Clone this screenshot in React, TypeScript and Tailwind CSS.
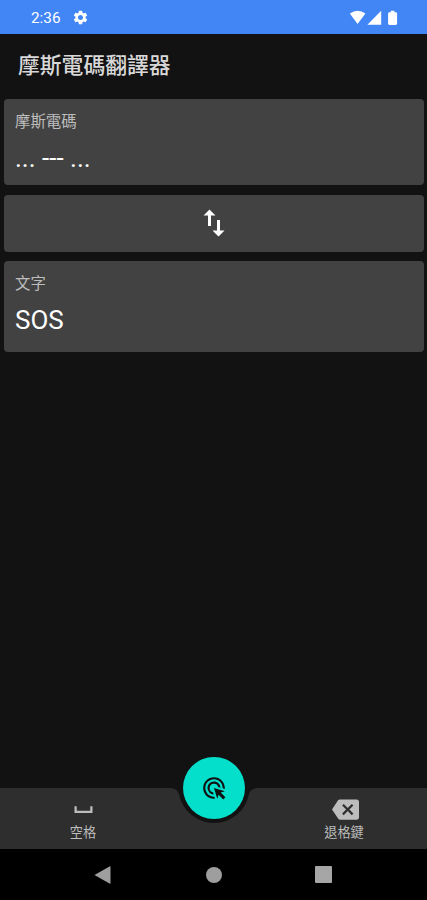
import React from 'react';
import clsx from 'clsx';
import { MdAdsClick, MdBackspace, MdImportExport, MdSettings, MdSpaceBar } from 'react-icons/md';

interface PanelProps {
  children: React.ReactNode;
  className?: string;
}

function Panel({ children, className }: PanelProps) {
  return <section className={clsx('rounded bg-[#424242]', className)}>{children}</section>;
}

interface FieldProps {
  label: string;
  value: string;
  className?: string;
}

function Field({ label, value, className }: FieldProps) {
  return (
    <Panel className={clsx('px-[11px] pt-[13px]', className)}>
      <p className="text-[15.4px] leading-5 text-[#bdbdbd]">{label}</p>
      <p className="mt-[9px] text-[26px] leading-[34px] text-white">{value}</p>
    </Panel>
  );
}

function StatusBar() {
  return (
    <div className="flex h-[33.5px] items-center bg-[#4285f4] pl-[31px] pr-[29px] pt-[2px] text-white">
      <span className="text-[15.3px] leading-5">2:36</span>
      <MdSettings className="ml-[11px] size-[17px]" />
      <svg className="ml-auto" width="49" height="16" viewBox="0 0 49 16" fill="currentColor">
        <path d="M.8 3.4Q8.6-2 16.4 3.4L8.6 14z" />
        <path d="M32.2.8v14H18.4z" />
        <path d="M41.8.7h3.6v1.5h1.3q1.4 0 1.4 1.4v10q0 1.4-1.4 1.4h-6.2q-1.4 0-1.4-1.4v-10q0-1.4 1.4-1.4h1.3z" />
      </svg>
    </div>
  );
}

interface ActionProps {
  icon: React.ReactNode;
  label: string;
}

function Action({ icon, label }: ActionProps) {
  return (
    <button className="flex w-[166px] flex-col items-center pt-[8px] text-[#bdbdbd]">
      {icon}
      <span className="text-[13.2px] leading-5">{label}</span>
    </button>
  );
}

function BottomBar() {
  return (
    <div className="relative flex h-[61px] justify-between bg-[#2e2e2e]">
      <Action icon={<MdSpaceBar className="size-[27px]" />} label="空格" />
      <Action icon={<MdBackspace className="ml-[2px] size-[27px]" />} label="退格鍵" />
      {/* notch under the round key */}
      <svg className="absolute left-[170px] top-[-1px]" width="88" height="38" viewBox="0 0 88 38" fill="#121212">
        <path d="M0 0V1Q7 1 9 7A35.6 35.6 0 0 0 79 7Q81 1 88 1V0z" />
      </svg>
      <button className="absolute left-[183px] top-[-31px] flex size-[62px] items-center justify-center rounded-full bg-[#03dfca] text-[#101010]">
        <MdAdsClick className="size-[26px]" />
      </button>
    </div>
  );
}

function SystemNav() {
  return (
    <div className="flex h-[51px] items-center bg-black pl-[94px] text-[#9e9e9e]">
      <svg width="17" height="20" viewBox="0 0 17 20" fill="currentColor">
        <path d="M.5 10 15.5 1.4q1-.5 1 .6v16q0 1.1-1 .6z" />
      </svg>
      <span className="ml-[95px] size-4 rounded-full bg-[#9e9e9e]" />
      <span className="ml-[93px] size-[17px] rounded-[1px] bg-[#a6a6a6]" />
    </div>
  );
}

export default function App() {
  return (
    <div className="flex h-[900px] w-[427px] flex-col overflow-hidden bg-[#121212] font-[Roboto,'Noto_Sans_CJK_TC',sans-serif]">
      <StatusBar />
      <h1 className="px-[18px] pt-4 text-[21.8px] font-medium leading-8 text-[#d8d8d8]">摩斯電碼翻譯器</h1>
      <main className="flex flex-1 flex-col pl-1 pr-[3px] pt-[17.5px]">
        <Field label="摩斯電碼" value="... --- ..." className="h-[86px]" />
        <Panel className="mt-[10px] flex h-[56.5px] items-center justify-center text-white">
          <MdImportExport className="size-9" />
        </Panel>
        <Field label="文字" value="SOS" className="mt-[9.5px] h-[91px]" />
      </main>
      <BottomBar />
      <SystemNav />
    </div>
  );
}
